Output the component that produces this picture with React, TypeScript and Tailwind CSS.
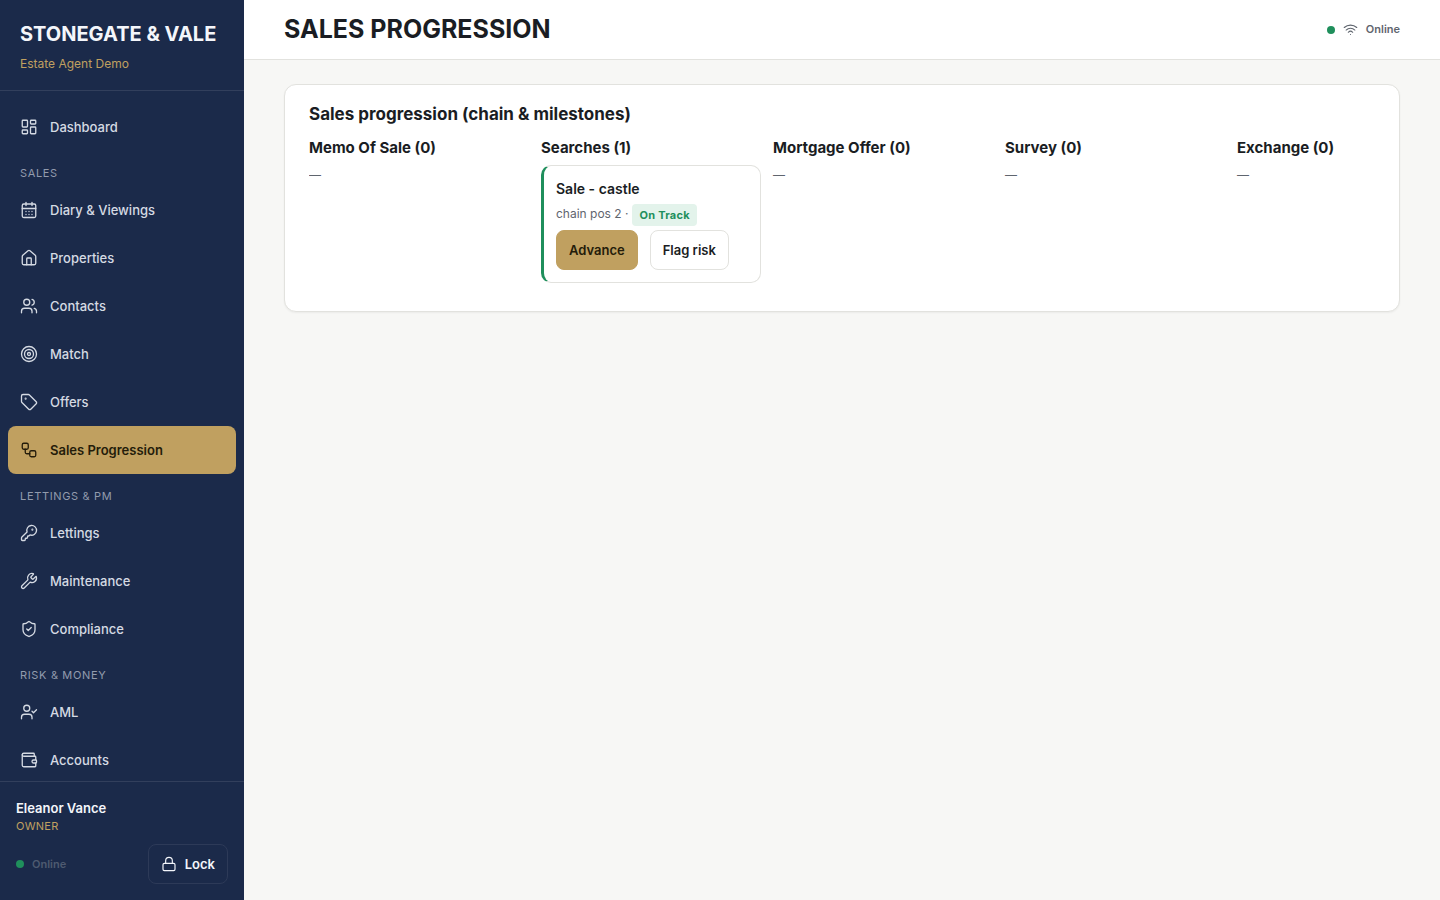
import {
  CalendarDays,
  House,
  KeyRound,
  LayoutDashboard,
  Lock,
  ShieldCheck,
  Tag,
  Target,
  UserCheck,
  Users,
  Wallet,
  Wifi,
  Workflow,
  Wrench,
  type LucideIcon,
} from "lucide-react";

type NavItem = { label: string; icon: LucideIcon };
type NavGroup = { title?: string; items: NavItem[] };

const navGroups: NavGroup[] = [
  { items: [{ label: "Dashboard", icon: LayoutDashboard }] },
  {
    title: "Sales",
    items: [
      { label: "Diary & Viewings", icon: CalendarDays },
      { label: "Properties", icon: House },
      { label: "Contacts", icon: Users },
      { label: "Match", icon: Target },
      { label: "Offers", icon: Tag },
      { label: "Sales Progression", icon: Workflow },
    ],
  },
  {
    title: "Lettings & PM",
    items: [
      { label: "Lettings", icon: KeyRound },
      { label: "Maintenance", icon: Wrench },
      { label: "Compliance", icon: ShieldCheck },
    ],
  },
  {
    title: "Risk & Money",
    items: [
      { label: "AML", icon: UserCheck },
      { label: "Accounts", icon: Wallet },
    ],
  },
];

type Sale = { name: string; chainPos: number; status: string };
type Stage = { title: string; sales: Sale[] };

const stages: Stage[] = [
  { title: "Memo Of Sale", sales: [] },
  { title: "Searches", sales: [{ name: "Sale - castle", chainPos: 2, status: "On Track" }] },
  { title: "Mortgage Offer", sales: [] },
  { title: "Survey", sales: [] },
  { title: "Exchange", sales: [] },
];

const Sidebar = () => {
  return (
    <aside className="flex h-screen w-[244px] shrink-0 flex-col bg-[#1b2a4a]">
      <div className="border-b border-white/10 px-5 pt-5 pb-4">
        <div className="text-xl leading-7 font-bold text-[#f4f6fb]">STONEGATE &amp; VALE</div>
        <div className="mt-1.5 text-xs leading-5 text-[#c0a060]">Estate Agent Demo</div>
      </div>

      <nav className="min-h-0 flex-1 overflow-hidden px-2 pt-3">
        {navGroups.map((group, i) => (
          <div key={i}>
            {group.title && (
              <h2 className="flex h-[35px] items-center px-3 pt-2 text-[11px] leading-4 tracking-[0.06em] text-[#929bad] uppercase">
                {group.title}
              </h2>
            )}
            {group.items.map(({ label, icon: Icon }) => {
              const active = label === "Sales Progression";
              return (
                <a
                  key={label}
                  href="#"
                  aria-current={active ? "page" : undefined}
                  className={
                    active
                      ? "flex h-12 items-center gap-3 rounded-lg bg-[#c0a060] px-3 text-[13px] leading-5 font-semibold text-[#241c0a]"
                      : "flex h-12 items-center gap-3 rounded-lg px-3 text-[13px] leading-5 font-medium text-[#d5dae3]"
                  }
                >
                  <Icon size={18} strokeWidth={1.75} />
                  {label}
                </a>
              );
            })}
          </div>
        ))}
      </nav>

      <div className="border-t border-white/10 p-4">
        <div className="text-[13px] leading-5 font-semibold text-[#f4f6fb]">Eleanor Vance</div>
        <div className="text-[11px] leading-4 tracking-wide text-[#c0a060]">OWNER</div>
        <div className="mt-2.5 flex items-center justify-between">
          <div className="flex items-center gap-2 text-[11px] leading-[17px] font-semibold text-[#4e5a70]">
            <span className="h-2 w-2 rounded-full bg-[#1f8f5c]" />
            Online
          </div>
          <button
            type="button"
            className="flex h-10 items-center gap-2 rounded-lg border border-[#2d3a58] px-3 text-[13px] leading-5 font-semibold text-[#f4f6fb]"
          >
            <Lock size={16} strokeWidth={1.75} />
            Lock
          </button>
        </div>
      </div>
    </aside>
  );
};

const SaleCard = ({ sale }: { sale: Sale }) => {
  return (
    <article className="rounded-[10px] border border-l-[3px] border-[#e2e2de] border-l-[#1f8f5c] p-3">
      <h4 className="text-sm leading-[22px] font-semibold">{sale.name}</h4>
      <p className="mt-1 flex gap-1 text-xs leading-5 text-[#5f656e]">
        chain pos {sale.chainPos} ·
        <span className="rounded bg-[#e3f3eb] px-[7px] text-[11px] leading-[22px] font-bold tracking-wide text-[#1f8f5c]">
          {sale.status}
        </span>
      </p>
      <div className="mt-1 flex gap-3">
        <button
          type="button"
          className="h-10 rounded-lg border border-[#c0a060] bg-[#c0a060] px-3 text-[13px] leading-5 font-semibold text-[#241c0a]"
        >
          Advance
        </button>
        <button
          type="button"
          className="h-10 rounded-lg border border-[#e2e2de] bg-white px-3 text-[13px] leading-5 font-semibold"
        >
          Flag risk
        </button>
      </div>
    </article>
  );
};

const App = () => {
  return (
    <div className="flex h-screen bg-[#f7f7f5] font-['Inter','Liberation_Sans',sans-serif] text-[#1a1d23]">
      <Sidebar />

      <div className="flex min-w-0 flex-1 flex-col">
        <header className="flex h-[60px] shrink-0 items-center justify-between border-b border-[#e2e2de] bg-white px-10">
          <h1 className="text-[25px] leading-[31px] font-bold">SALES PROGRESSION</h1>
          <div className="flex items-center gap-2 text-[11px] leading-[17px] font-semibold text-[#5f656e]">
            <span className="h-2 w-2 rounded-full bg-[#1f8f5c]" />
            <Wifi size={15} strokeWidth={1.75} />
            Online
          </div>
        </header>

        <main className="flex-1 overflow-y-auto px-10 py-6">
          <section className="rounded-xl border border-[#e2e2de] bg-white px-6 pt-[17px] pb-6 shadow-xs">
            <h2 className="text-[17px] leading-6 font-bold">Sales progression (chain &amp; milestones)</h2>
            <div className="mt-[11px] flex gap-3 overflow-hidden pb-1">
              {stages.map((stage) => (
                <div key={stage.title} className="w-[220px] shrink-0">
                  <h3 className="mb-1.5 text-[15px] leading-[22px] font-bold">
                    {stage.title} ({stage.sales.length})
                  </h3>
                  {stage.sales.length === 0 && <p className="text-xs leading-5 text-[#5f656e]">—</p>}
                  {stage.sales.map((sale) => (
                    <SaleCard key={sale.name} sale={sale} />
                  ))}
                </div>
              ))}
            </div>
          </section>
        </main>
      </div>
    </div>
  );
};

export default App;
